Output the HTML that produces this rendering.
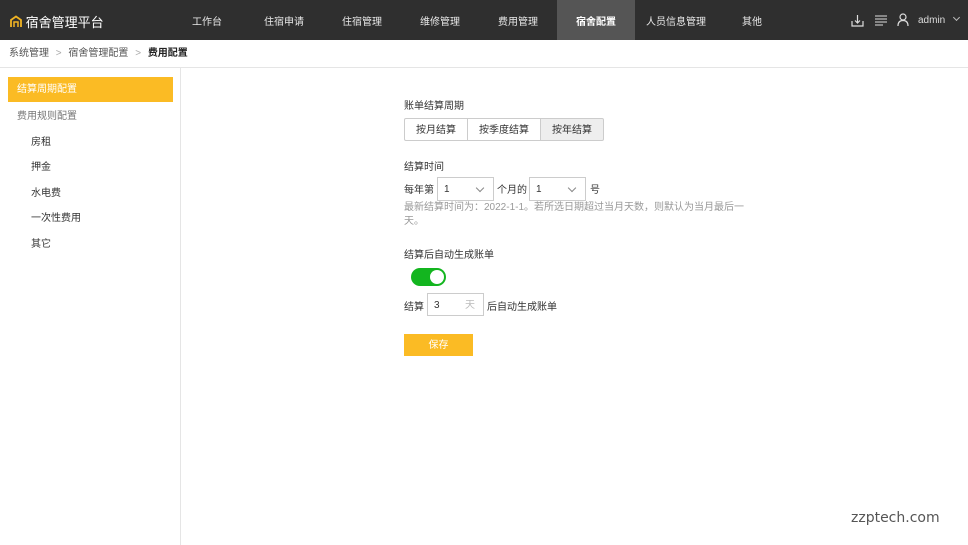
<!DOCTYPE html>
<html><head><meta charset="utf-8"><style>
*{margin:0;padding:0;box-sizing:border-box}
body{width:968px;height:545px;overflow:hidden;background:#fff;font-family:"Liberation Sans","Noto Sans CJK SC",sans-serif;font-size:10px;color:#333;position:relative}
.top{position:absolute;left:0;top:0;width:968px;height:40px;background:#2f2f2f;color:#fff}
.logo{position:absolute;left:10px;top:12px;font-size:13px;color:#fff}
.nav{position:absolute;top:0;height:40px;padding-top:3px;line-height:40px;font-size:10px;color:#e8e8e8;text-align:center}
.crumb{position:absolute;top:40px;left:0;width:968px;height:28px;border-bottom:1px solid #e5e5e5;line-height:28px;padding-left:9px;font-size:10px;color:#555}
.side{position:absolute;left:0;top:68px;width:181px;height:477px;border-right:1px solid #e5e5e5}
.si{position:absolute;font-size:10px;color:#333}
.abs{position:absolute}
.seg{position:absolute;top:118px;height:23px;border:1px solid #ccc;line-height:23px;text-align:center;font-size:10px}
.sel{position:absolute;top:177px;height:24px;border:1px solid #ccc;line-height:24px;padding-left:6px;font-size:10px}
.sel:after{content:"";position:absolute;right:10px;top:7px;width:5px;height:5px;border-right:1px solid #888;border-bottom:1px solid #888;transform:rotate(45deg)}
</style></head><body>
<div class="top">
<div class="logo"><svg width="12" height="13" viewBox="0 0 12 13" style="vertical-align:-1px"><path d="M1 12V5L6 1.5 11 5V12" fill="none" stroke="#f0b323" stroke-width="1.8"/><path d="M4 12V7h4v5" fill="none" stroke="#f0b323" stroke-width="1.5"/></svg> 宿舍管理平台</div>
<div class="nav" style="left:177px;width:60px">工作台</div>
<div class="nav" style="left:254px;width:60px">住宿申请</div>
<div class="nav" style="left:332px;width:60px">住宿管理</div>
<div class="nav" style="left:410px;width:60px">维修管理</div>
<div class="nav" style="left:488px;width:60px">费用管理</div>
<div class="nav" style="left:557px;width:78px;background:#555;color:#fff;font-weight:bold">宿舍配置</div>
<div class="nav" style="left:640px;width:72px">人员信息管理</div>
<div class="nav" style="left:722px;width:60px">其他</div>
<svg class="abs" style="left:851px;top:14px" width="13" height="13" viewBox="0 0 13 13"><path d="M1 7v5h11V7M6.5 1v8M4 6.5l2.5 2.5 2.5-2.5" fill="none" stroke="#ddd" stroke-width="1.2"/></svg>
<svg class="abs" style="left:875px;top:15px" width="12" height="11" viewBox="0 0 12 11"><path d="M0 1h12M0 4h12M0 7h12M0 10h8" stroke="#ddd" stroke-width="1.1"/></svg>
<svg class="abs" style="left:897px;top:13px" width="12" height="13" viewBox="0 0 12 13"><circle cx="6" cy="4" r="3" fill="none" stroke="#ddd" stroke-width="1.2"/><path d="M1 13c0-4 2-5.5 5-5.5s5 1.5 5 5.5" fill="none" stroke="#ddd" stroke-width="1.2"/></svg>
<div class="abs" style="left:918px;top:15px;font-size:10px;color:#ddd">admin</div>
<div class="abs" style="left:954px;top:15px;width:5px;height:5px;border-right:1px solid #bbb;border-bottom:1px solid #bbb;transform:rotate(45deg)"></div>
</div>
<div class="crumb">系统管理 <span style="color:#aaa;margin:0 4px">&gt;</span> 宿舍管理配置 <span style="color:#aaa;margin:0 4px">&gt;</span> <b style="color:#222">费用配置</b></div>
<div class="side">
<div class="abs" style="left:8px;top:9px;width:165px;height:25px;background:#fbbb24;color:#fff;line-height:25px;padding-left:9px">结算周期配置</div>
<div class="si" style="left:17px;top:39px;color:#777">费用规则配置</div>
<div class="si" style="left:31px;top:65px">房租</div>
<div class="si" style="left:31px;top:90px">押金</div>
<div class="si" style="left:31px;top:116px">水电费</div>
<div class="si" style="left:31px;top:141px">一次性费用</div>
<div class="si" style="left:31px;top:167px">其它</div>
</div>
<div class="abs" style="left:404px;top:97px">账单结算周期</div>
<div class="seg" style="left:404px;width:64px;border-radius:2px 0 0 2px">按月结算</div>
<div class="seg" style="left:467px;width:74px">按季度结算</div>
<div class="seg" style="left:540px;width:64px;background:#eee;border-radius:0 2px 2px 0">按年结算</div>
<div class="abs" style="left:404px;top:158px">结算时间</div>
<div class="abs" style="left:404px;top:181px">每年第</div>
<div class="sel" style="left:437px;width:57px">1</div>
<div class="abs" style="left:497px;top:181px">个月的</div>
<div class="sel" style="left:529px;width:57px">1</div>
<div class="abs" style="left:590px;top:181px">号</div>
<div class="abs" style="left:404px;top:201px;width:350px;color:#999;line-height:14px">最新结算时间为：2022-1-1。若所选日期超过当月天数，则默认为当月最后一天。</div>
<div class="abs" style="left:404px;top:246px">结算后自动生成账单</div>
<div class="abs" style="left:411px;top:268px;width:35px;height:18px;border-radius:9px;background:#13b51f"><div style="position:absolute;right:2px;top:2px;width:14px;height:14px;border-radius:50%;background:#fff"></div></div>
<div class="abs" style="left:404px;top:298px">结算</div>
<div class="abs" style="left:427px;top:293px;width:57px;height:23px;border:1px solid #ccc;line-height:23px;padding-left:6px">3<span style="position:absolute;right:8px;color:#bbb">天</span></div>
<div class="abs" style="left:487px;top:298px">后自动生成账单</div>
<div class="abs" style="left:404px;top:334px;width:69px;height:22px;background:#fbbb24;color:#fff;line-height:24px;text-align:center">保存</div>
<div class="abs" style="left:851px;top:510px;font-size:14px;color:#555;font-family:'DejaVu Sans',sans-serif">zzptech.com</div>
</body></html>
